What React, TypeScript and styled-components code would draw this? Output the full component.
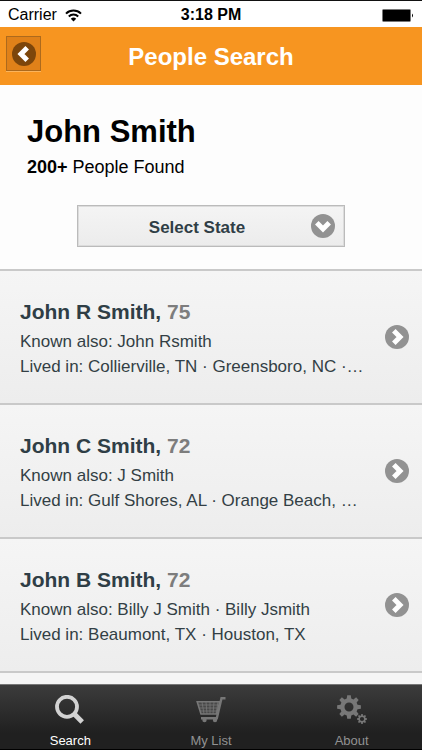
import React from "react";
import styled, { createGlobalStyle } from "styled-components";

const GlobalStyle = createGlobalStyle`
  * { box-sizing: border-box; }
  body {
    margin: 0;
    background: #fdfdfd;
    font-family: "Liberation Sans", Arial, Helvetica, sans-serif;
    color: #000;
  }
  button, select { font-family: inherit; margin: 0; cursor: pointer; }
  h1, h2, p, ul { margin: 0; padding: 0; }
`;

const Screen = styled.div`
  height: 100vh;
  display: flex;
  flex-direction: column;
  border-top: 1px solid #111;
  overflow: hidden;
`;

const StatusBar = styled.div`
  flex: none;
  display: grid;
  grid-template-columns: 1fr auto 1fr;
  align-items: center;
  height: 26px;
  padding: 2px 8px 0;
  font-size: 16px;
  line-height: 20px;
  background: #fff;
`;

const Carrier = styled.div`
  display: flex;
  align-items: center;
  gap: 8px;
`;

const Clock = styled.time`
  font-weight: bold;
`;

const BatteryIcon = styled.svg`
  justify-self: end;
`;

const TitleBar = styled.header`
  flex: none;
  display: grid;
  grid-template-columns: 36px 1fr 36px;
  height: 58px;
  padding: 9px 6px 0;
  background: #f79520;
`;

const BackButton = styled.button`
  display: grid;
  place-items: center;
  width: 35px;
  height: 35px;
  padding: 0;
  background: #e08119;
  border: 1px solid #ad6a1d;
  box-shadow: 0 1px 0 #fbb45c;
`;

const Title = styled.h1`
  padding-top: 7px;
  font-size: 24px;
  line-height: 28px;
  text-align: center;
  color: #fff;
`;

const Content = styled.main`
  flex: 1;
  min-height: 0;
  overflow: hidden;
`;

const Summary = styled.section`
  display: flex;
  flex-direction: column;
  padding: 28px 27px 22px;
`;

const SearchedName = styled.h2`
  font-size: 31px;
  line-height: 38px;
`;

const Found = styled.p`
  padding-top: 4px;
  font-size: 18px;
  line-height: 24px;
`;

const StatePicker = styled.div`
  align-self: center;
  display: grid;
  grid-template-columns: 1fr;
  align-items: center;
  width: 268px;
  margin-top: 26px;

  > * {
    grid-area: 1 / 1;
  }

  > svg {
    justify-self: end;
    margin-right: 10px;
    pointer-events: none;
  }
`;

const StateSelect = styled.select`
  appearance: none;
  width: 100%;
  height: 42px;
  padding: 4px 30px 0 2px;
  border: 1px solid #bbb;
  border-radius: 0;
  box-shadow: inset 0 0 0 1px #dcdcdc;
  background: linear-gradient(#f4f4f4, #ececec);
  font-size: 17px;
  font-weight: bold;
  line-height: 24px;
  text-align: center;
  text-align-last: center;
  color: #2f3e46;
`;

const Results = styled.ul`
  list-style: none;
`;

const ResultButton = styled.button`
  display: grid;
  grid-template-columns: 1fr 24px;
  align-items: center;
  gap: 20px;
  width: 100%;
  height: 134px;
  padding: 0 13px 0 20px;
  border: 0;
  border-top: 2px solid #c9c9c9;
  background: linear-gradient(#f5f5f5, #ededed);
  text-align: left;
  color: #333f45;
`;

const ResultText = styled.span`
  display: block;
  min-width: 0;
  padding-top: 2px;
`;

const PersonName = styled.strong`
  display: block;
  padding-bottom: 3px;
  font-size: 21px;
  line-height: 28px;
  color: #2f3e46;
`;

const Age = styled.span`
  color: #7d7d7d;
`;

const Detail = styled.span`
  display: block;
  overflow: hidden;
  text-overflow: ellipsis;
  white-space: nowrap;
  font-size: 17px;
  line-height: 25px;
`;

const TabBar = styled.nav`
  flex: none;
  display: grid;
  grid-template-columns: repeat(3, 1fr);
  height: 66px;
  border-top: 1px solid #777;
  border-bottom: 1px solid #000;
  background: linear-gradient(#3c3c3c, #202020 75%);
`;

const Tab = styled.button<{ $active?: boolean }>`
  display: flex;
  flex-direction: column;
  align-items: center;
  gap: 7px;
  padding: 10px 0 0;
  border: 0;
  background: none;
  font-size: 13px;
  line-height: 20px;
  color: ${(p) => (p.$active ? "#fff" : "#929292")};
`;

function RoundArrow({ turn = 0, fill = "#929292" }: { turn?: number; fill?: string }) {
  return (
    <svg width="24" height="24" viewBox="0 0 24 24" aria-hidden="true">
      <circle cx="12" cy="12" r="12" fill={fill} />
      <path
        d="M8.8 5.8 15 12l-6.2 6.2"
        transform={`rotate(${turn} 12 12)`}
        fill="none"
        stroke="#fff"
        strokeWidth="5"
      />
    </svg>
  );
}

function WifiIcon() {
  return (
    <svg width="17" height="13" viewBox="0 0 17 13" fill="none" stroke="#000" strokeWidth="2" aria-hidden="true">
      <path d="M1 4.6a10.8 10.8 0 0 1 15 0M3.8 7.5a6.8 6.8 0 0 1 9.4 0" />
      <path d="M8.5 12.4 5.8 9.7a3.9 3.9 0 0 1 5.4 0z" fill="#000" stroke="none" />
    </svg>
  );
}

function SearchIcon() {
  return (
    <svg width="30" height="29" viewBox="0 0 30 29" fill="none" stroke="#d2d2d2" aria-hidden="true">
      <circle cx="12" cy="11.8" r="10" strokeWidth="3.8" />
      <path d="m18.8 18.6 8.4 8.4" strokeWidth="5" />
    </svg>
  );
}

function CartIcon() {
  return (
    <svg width="30" height="29" viewBox="0 0 30 29" fill="none" stroke="#777" aria-hidden="true">
      <path d="M29.5 3.3h-4L20.8 23.2H5" strokeWidth="2.4" />
      <path d="M1.2 6.7h22.6L20.6 19H5z" fill="#484848" strokeWidth="1.6" />
      <path d="M2.5 10h20M3.5 13h19M4 16h18M6 7l2 12M10 7l1 12M14 7v12M18 7l-1 12M22 7l-2 12" strokeWidth="0.8" />
      <circle cx="8.5" cy="25" r="2.2" fill="#777" stroke="none" />
      <circle cx="19" cy="25" r="2.2" fill="#777" stroke="none" />
    </svg>
  );
}

function gearPath(cx: number, cy: number, outer: number, inner: number, hole: number) {
  const points: string[] = [];
  for (let tooth = 0; tooth < 8; tooth++) {
    [[-0.26, inner], [-0.15, outer], [0.15, outer], [0.26, inner]].forEach(([offset, radius]) => {
      const angle = (tooth * Math.PI) / 4 + offset;
      points.push(`${cx + radius * Math.cos(angle)} ${cy + radius * Math.sin(angle)}`);
    });
  }
  return `M${points.join("L")}ZM${cx - hole} ${cy}a${hole} ${hole} 0 1 0 ${hole * 2} 0a${hole} ${hole} 0 1 0 ${-hole * 2} 0Z`;
}

function GearsIcon() {
  return (
    <svg width="30" height="29" viewBox="0 0 30 29" fill="#777" fillRule="evenodd" aria-hidden="true">
      <path d={gearPath(12, 12, 12, 8.8, 4.5)} />
      <path d={gearPath(25, 24, 5, 3.7, 2.1)} />
    </svg>
  );
}

const people = [
  { name: "John R Smith", age: 75, known: "John Rsmith", lived: "Collierville, TN · Greensboro, NC ·…" },
  { name: "John C Smith", age: 72, known: "J Smith", lived: "Gulf Shores, AL · Orange Beach, …" },
  { name: "John B Smith", age: 72, known: "Billy J Smith · Billy Jsmith", lived: "Beaumont, TX · Houston, TX" },
];

const NextResult = styled.div`
  height: 40px;
  border-top: 2px solid #c9c9c9;
  background: #f5f5f5;
`;

export default function App() {
  return (
    <>
      <GlobalStyle />
      <Screen>
        <StatusBar>
          <Carrier>
            Carrier
            <WifiIcon />
          </Carrier>
          <Clock>3:18 PM</Clock>
          <BatteryIcon width="32" height="13" viewBox="0 0 32 13" aria-hidden="true">
            <rect x="0.5" y="0.5" width="28" height="12" rx="1" fill="#000" stroke="#777" />
            <path d="M30 4.5q2 2 0 4z" fill="#000" />
          </BatteryIcon>
        </StatusBar>
        <TitleBar>
          <BackButton aria-label="Back">
            <RoundArrow turn={180} fill="#7d460b" />
          </BackButton>
          <Title>People Search</Title>
        </TitleBar>
        <Content>
          <Summary>
            <SearchedName>John Smith</SearchedName>
            <Found>
              <strong>200+</strong> People Found
            </Found>
            <StatePicker>
              <StateSelect aria-label="State">
                <option>Select State</option>
              </StateSelect>
              <RoundArrow turn={90} />
            </StatePicker>
          </Summary>
          <Results>
            {people.map((person) => (
              <li key={person.name}>
                <ResultButton>
                  <ResultText>
                    <PersonName>
                      {person.name}, <Age>{person.age}</Age>
                    </PersonName>
                    <Detail>Known also: {person.known}</Detail>
                    <Detail>Lived in: {person.lived}</Detail>
                  </ResultText>
                  <RoundArrow />
                </ResultButton>
              </li>
            ))}
          </Results>
          <NextResult />
        </Content>
        <TabBar>
          <Tab $active aria-current="page">
            <SearchIcon />
            Search
          </Tab>
          <Tab>
            <CartIcon />
            My List
          </Tab>
          <Tab>
            <GearsIcon />
            About
          </Tab>
        </TabBar>
      </Screen>
    </>
  );
}
